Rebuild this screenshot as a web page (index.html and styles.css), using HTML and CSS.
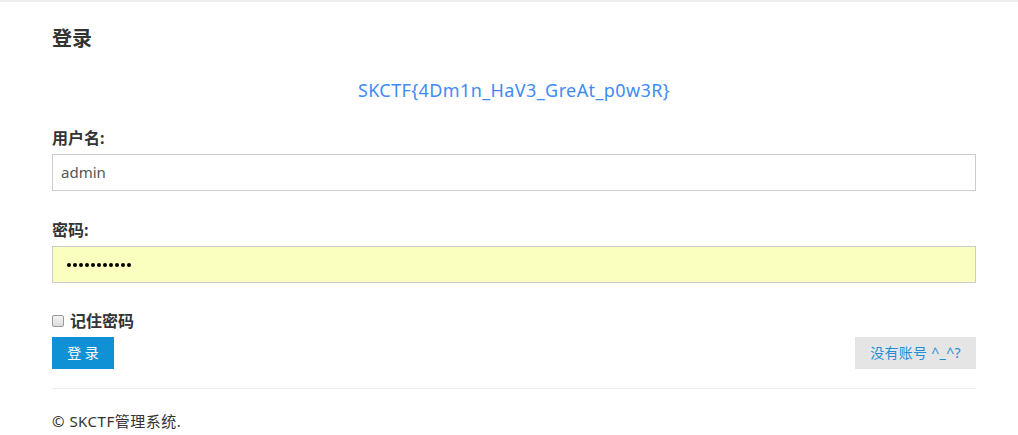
FILE: index.html
```html
<!DOCTYPE html>
<html lang="zh">
<head>
<meta charset="utf-8">
<title>登录</title>
<link rel="stylesheet" href="styles.css">
</head>
<body>
<div class="page">
  <div class="container">
    <h3 class="title">登录</h3>
    <p class="flag">SKCTF{4Dm1n_HaV3_GreAt_p0w3R}</p>
    <form class="form">
      <div class="group">
        <label class="label">用户名:</label>
        <div class="input">admin</div>
      </div>
      <div class="group">
        <label class="label">密码:</label>
        <div class="input autofill">
          <span class="dots"><i></i><i></i><i></i><i></i><i></i><i></i><i></i><i></i><i></i><i></i><i></i></span>
        </div>
      </div>
      <label class="remember"><span class="check"></span>记住密码</label>
      <div class="actions">
        <span class="btn-primary">登 录</span>
        <span class="btn-default">没有账号 ^_^?</span>
      </div>
    </form>
    <hr class="rule">
    <p class="footer">© SKCTF管理系统.</p>
  </div>
</div>
</body>
</html>
```
FILE: styles.css
```css
html, body {
  margin: 0;
  padding: 0;
  background: #fff;
}
body {
  font-family: "Noto Sans", "Noto Sans CJK SC", sans-serif;
  color: #333;
  font-size: 14px;
}
.page {
  border-top: 2px solid #eeeeee;
}
.container {
  width: 924px;
  margin-left: 52px;
  padding-top: 21px;
}
.title {
  margin: 0;
  font-size: 20px;
  font-weight: bold;
  line-height: 32px;
  height: 32px;
  color: #333;
}
.flag {
  margin: 21px 0 0;
  text-align: center;
  font-size: 18px;
  line-height: 28px;
  color: #3f8bf5;
  letter-spacing: 0.4px;
}
.form {
  margin-top: 24px;
}
.group {
  display: flex;
  flex-direction: column;
  margin-bottom: 29px;
}
.label {
  font-size: 16px;
  font-weight: bold;
  line-height: 20px;
  margin: 0 0 6px;
  color: #333;
}
.input {
  box-sizing: border-box;
  height: 37px;
  border: 1px solid #cccccc;
  padding: 0 8px;
  font-size: 15px;
  line-height: 35px;
  color: #555;
  background: #fff;
  display: flex;
  align-items: center;
}
.input.autofill {
  background: #fafebf;
  padding-left: 14px;
}
.dots {
  display: flex;
  gap: 2px;
}
.dots i {
  display: block;
  width: 4px;
  height: 4px;
  border-radius: 50%;
  background: #000;
}
.remember {
  display: flex;
  align-items: center;
  font-size: 16px;
  font-weight: bold;
  line-height: 22px;
  margin-top: -2px;
  color: #333;
}
.check {
  box-sizing: border-box;
  width: 12px;
  height: 12px;
  border: 1px solid #9a9a9a;
  border-radius: 2px;
  background: linear-gradient(#f4f4f4, #dcdcdc);
  margin-right: 6px;
}
.actions {
  display: flex;
  justify-content: space-between;
  margin-top: 5px;
}
.btn-primary {
  display: inline-block;
  width: 62px;
  height: 32px;
  line-height: 32px;
  text-align: center;
  background: #1191d5;
  color: #fff;
  font-size: 14px;
}
.btn-default {
  display: inline-block;
  width: 121px;
  height: 32px;
  line-height: 32px;
  text-align: center;
  background: #e5e5e5;
  color: #1f8fd2;
  font-size: 14px;
  letter-spacing: 0.3px;
}
.rule {
  border: 0;
  border-top: 1px solid #eeeeee;
  margin: 19px 0 0;
}
.footer {
  margin: 22px 0 0;
  font-size: 15px;
  line-height: 20px;
  color: #333;
  letter-spacing: 0.5px;
}
```
